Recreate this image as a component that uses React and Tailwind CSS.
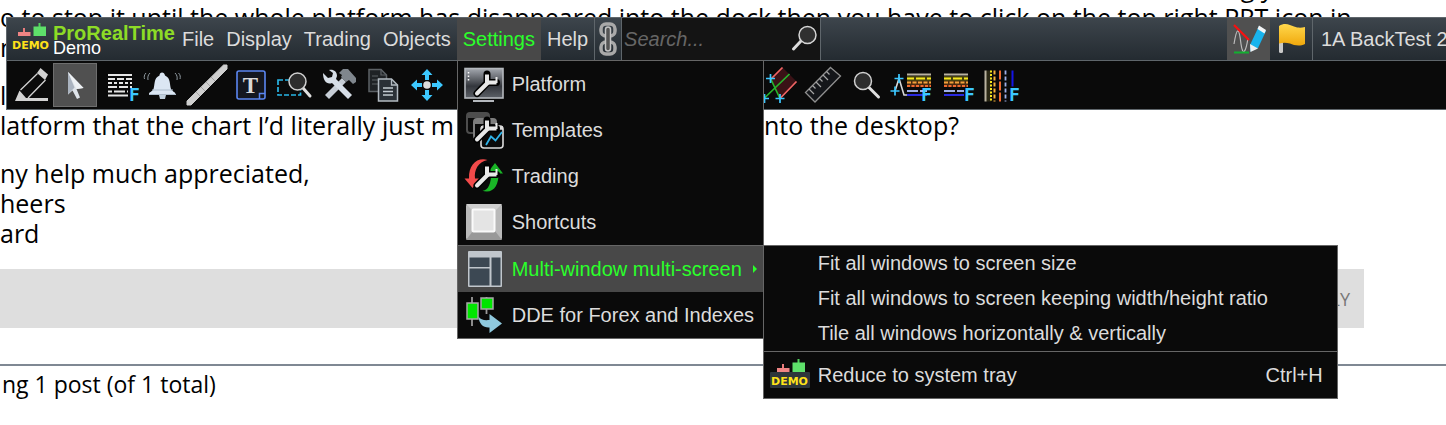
import React, { useState } from 'react';

function DemoLogo({ boxed }) {
  return (
    <svg width="40" height="32" viewBox="0 0 40 32" className="shrink-0" aria-hidden="true">
      {boxed && <rect x="0" y="13" width="40" height="16" rx="1" fill="#2d353b" />}
      <path d="M13 5v5" stroke="#e87c7c" strokeWidth="2" />
      <rect x="7" y="9" width="12.5" height="4" fill="#ee8484" />
      <path d="M28.5 0v4" stroke="#4fd35a" strokeWidth="2" />
      <rect x="22.5" y="3.5" width="12.5" height="9.5" fill="#5ee06a" />
      <text x="1" y="26" fontSize="11" fontWeight="bold" fill="#ffe21a" className="font-['DejaVu_Sans',sans-serif]">
        DEMO
      </text>
    </svg>
  );
}

function ToolSvg({ children }) {
  return (
    <svg width="44" height="44" viewBox="0 0 44 44" fill="none" className="block" aria-hidden="true">
      {children}
    </svg>
  );
}

function MenuSvg({ children }) {
  return (
    <svg width="54" height="46" viewBox="0 0 54 46" fill="none" className="block shrink-0" aria-hidden="true">
      {children}
    </svg>
  );
}

function LetterF({ x }) {
  return (
    <text x={x} y="38" fontSize="18" fontWeight="bold" fill="#3cc8ff" className="font-['DejaVu_Sans_Mono',monospace]">
      F
    </text>
  );
}

function Wrench() {
  return (
    <>
      <path d="M19 32.5L29 22M29 13v8.500h9.500" stroke="#000" strokeWidth="7" strokeLinecap="round" strokeLinejoin="round" />
      <path d="M19 32.5L30 21.500" stroke="#e8e8e8" strokeWidth="4" strokeLinecap="round" />
      <path d="M29 13.500v8h9.500" stroke="#e8e8e8" strokeWidth="4" strokeLinejoin="round" />
      <path d="M38.500 16v6" stroke="#e8e8e8" strokeWidth="2" />
    </>
  );
}

function Levels({ x }) {
  return (
    <g transform={`translate(${x} 0)`}>
      <path d="M0 14h24v10H0z" fill="#4a2a10" />
      <path d="M0 13h24v5H0z" fill="#44400f" />
      <path d="M0 11.500h24" stroke="#b9b2a0" strokeWidth="2" />
      <path d="M0 15.500h24" stroke="#f6e81c" strokeWidth="2" strokeDasharray="7 2 9 2" />
      <path d="M0 19.500h24" stroke="#f2a13a" strokeWidth="2" strokeDasharray="4 1.500" />
      <path d="M0 23h24" stroke="#f0692f" strokeWidth="2" strokeDasharray="3 1.500" />
      <path d="M0 28h20" stroke="#9fb0e8" strokeWidth="1.800" strokeDasharray="11 2" />
      <path d="M0 32h20" stroke="#2a2ae0" strokeWidth="2" />
    </g>
  );
}

const tools = [
  {
    name: 'Draw',
    icon: (
      <ToolSvg>
        <path d="M6 38l4.500-10.500 6.500 7.500H39v3z" fill="#d2d2d2" />
        <path d="M11.500 27L28.500 10.500M19 35l17.500-18" stroke="#d2d2d2" strokeWidth="1.300" />
        <path d="M31.500 5l7.500 6.500-3 5.500-8-7z" fill="#d2d2d2" />
      </ToolSvg>
    ),
  },
  {
    name: 'Pointer',
    icon: (
      <ToolSvg>
        <path d="M15 9v22.500l4.500-4L24 36l3-1.500-3.500-8.500 7-1z" fill="#dfe4ea" />
        <path d="M15 9l6.500 15.500-6.500 7z" fill="#aab3bf" />
        <path d="M15 9l15.500 16-7 1z" fill="#eef1f4" />
      </ToolSvg>
    ),
  },
  {
    name: 'Retracement levels',
    icon: (
      <ToolSvg>
        <g stroke="#e6e6e6" strokeWidth="2">
          <path d="M11 12h24" />
          <path d="M11 16h24" strokeDasharray="7 2" />
          <path d="M11 20h24" strokeDasharray="4 2 3 2" />
          <path d="M11 24h24" strokeDasharray="9 2" />
          <path d="M11 28.500h20" strokeDasharray="4 2 11 2" />
          <path d="M11 32.500h20" />
        </g>
        <LetterF x="32" />
      </ToolSvg>
    ),
  },
  {
    name: 'Alerts',
    icon: (
      <ToolSvg>
        <path d="M8 31c0-2 3-2 4.500-5 1.500-4 0-11 6-13.500 0-4 5-4 5.500 0 6 2.500 4.500 9.500 6 13.500 1.500 3 4.500 3 4.500 5z" fill="#dbe6f3" />
        <path d="M11 27h21M8 31.500h27" stroke="#aebccb" strokeWidth="1.200" />
        <path d="M18 32h7l-1 4h-5z" fill="#c1d0de" />
        <path d="M9 10c-2 2-2.500 4-2 7M5 10c-2 2-2 4-1.500 6M34 10c2 2 2.500 4 2 7M37.500 10c2 2 2 4 1.500 6" stroke="#8e989f" strokeWidth="1" />
      </ToolSvg>
    ),
  },
  {
    name: 'Line',
    icon: (
      <ToolSvg>
        <path d="M38.500 2H42v4L6 42H2v-4z" fill="#cfcfcf" stroke="#cfcfcf" />
        <path d="M11 29l4 4M16 24l4 4M21 19l4 4M26 14l4 4" stroke="#999" strokeWidth="0.800" />
      </ToolSvg>
    ),
  },
  {
    name: 'Text',
    icon: (
      <ToolSvg>
        <rect x="8" y="8" width="28" height="28" rx="2" fill="#14171f" stroke="#5b86f0" strokeWidth="1.600" />
        <path d="M30.500 36v-5.500H36" stroke="#5b86f0" strokeWidth="1.500" />
        <text x="21.5" y="29.5" textAnchor="middle" fontSize="23" fontWeight="bold" fill="#d9d9d9" className="font-['Liberation_Serif',serif]">
          T
        </text>
      </ToolSvg>
    ),
  },
  {
    name: 'Zoom area',
    icon: (
      <ToolSvg>
        <rect x="5" y="17" width="22.500" height="15" stroke="#29b6e6" strokeWidth="1.700" strokeDasharray="5 2" />
        <path d="M30 25l7 8" stroke="#e0e0e0" strokeWidth="3" strokeLinecap="round" />
        <circle cx="24.500" cy="18.500" r="8.500" fill="#2d2d2d" stroke="#d0d0d0" strokeWidth="1.500" />
      </ToolSvg>
    ),
  },
  {
    name: 'Tools',
    icon: (
      <ToolSvg>
        <path d="M8 32l17-17 4 4-17 17z" fill="#c6cdd5" />
        <path d="M22 10l4-4h5l8 9v4l-3 2-4-4-3 2-5-5 1-2z" fill="#7f868d" />
        <path d="M6 10l5 5 4-1 1-4-4-3c4-1 8 1 8 6l-1 3 16 16-4 4-16-16c-5 2-9-2-9-10z" fill="#d6dee7" />
      </ToolSvg>
    ),
  },
  {
    name: 'Copy',
    icon: (
      <ToolSvg>
        <path d="M8 6.500h12l5.500 5.500v16.500H8z" fill="#1f2225" stroke="#5c6165" strokeWidth="1.500" />
        <path d="M20 6.500V12h5.500M11 13h6M11 17h6M11 21h6" stroke="#5c6165" strokeWidth="1.200" />
        <path d="M17.500 16h13l6 6v16h-19z" fill="#2b3137" stroke="#b2bac1" strokeWidth="1.500" />
        <path d="M30.500 16v6h6" stroke="#b2bac1" strokeWidth="1.300" />
        <path d="M22 25h10M22 28.500h10M22 32h10" stroke="#c4cbd1" strokeWidth="1.500" />
      </ToolSvg>
    ),
  },
  {
    name: 'Move',
    icon: (
      <ToolSvg>
        <path
          d="M22 6l5.500 6h-3.500v5h-4v-5h-3.500zM22 38l-5.500-6h3.500v-5h4v5h3.500zM6 22l6-5.500v3.500h5v4h-5v3.500zM38 22l-6 5.500v-3.500h-5v-4h5v-3.500z"
          fill="#3cc8ff"
        />
        <circle cx="22" cy="22" r="3.800" fill="#dcdcdc" />
      </ToolSvg>
    ),
  },
];

const chartTools = [
  {
    name: 'Channel',
    icon: (
      <ToolSvg>
        <path d="M25.500 4.500L13.500 16.500 23 35.500l16.500-17z" fill="#3a1216" />
        <path d="M25.500 4.500l-12 12M39.500 18.500L23 35.500" stroke="#f06464" strokeWidth="1.700" />
        <path d="M32.500 11L7 35.500M13.500 15.500L23 35.500" stroke="#27b52c" strokeWidth="1.700" />
        <path d="M9 15.500h9M13.500 11v9M3 35.500h9M7.500 31v9M18.500 35.500h9M23 31v9" stroke="#3cc8ff" strokeWidth="1.700" />
      </ToolSvg>
    ),
  },
  {
    name: 'Ruler',
    icon: (
      <ToolSvg>
        <path d="M29.500 4.500l10 8.500L14 39l-9.500-9.500z" fill="#14161a" stroke="#8f8f8f" strokeWidth="1.300" />
        <path d="M8 26l5 5M11.500 22.500l3 3M15 19l5 5M18.500 15.500l3 3M22 12l5 5M25.500 8.500l3 3" stroke="#a5a5a5" strokeWidth="1.200" />
      </ToolSvg>
    ),
  },
  {
    name: 'Zoom',
    icon: (
      <ToolSvg>
        <path d="M24 24.500l9.500 9.500" stroke="#e0e0e0" strokeWidth="3" strokeLinecap="round" />
        <circle cx="18" cy="18" r="8.500" fill="#2d2d2d" stroke="#d0d0d0" strokeWidth="1.500" />
      </ToolSvg>
    ),
  },
  {
    name: 'Fibonacci extension',
    icon: (
      <ToolSvg>
        <path d="M6 28l4-12.500L15 32h4" stroke="#d8d8d8" strokeWidth="1.600" />
        <path d="M1.500 28h9M6 23.500v9M5.500 15.500h9M10 11v9" stroke="#3cc8ff" strokeWidth="1.700" />
        <Levels x={18} />
        <LetterF x="32" />
      </ToolSvg>
    ),
  },
  {
    name: 'Fibonacci retracement',
    icon: (
      <ToolSvg>
        <Levels x={11} />
        <LetterF x="31" />
      </ToolSvg>
    ),
  },
  {
    name: 'Fibonacci time zones',
    icon: (
      <ToolSvg>
        <path d="M9 7.500h5v31H9z" fill="#2a2714" />
        <path d="M8.500 7.500v31" stroke="#b9b2a0" strokeWidth="2" />
        <path d="M14 7.500v31" stroke="#f6e81c" strokeWidth="2" strokeDasharray="2 1.500" />
        <path d="M17.500 7.500v31" stroke="#f2b03a" strokeWidth="2" strokeDasharray="4 2" />
        <path d="M23 7.500v31" stroke="#f0692f" strokeWidth="2" strokeDasharray="9 2" />
        <path d="M28.500 7.500v31" stroke="#9fb0e8" strokeWidth="1.800" strokeDasharray="4 2" />
        <path d="M35.500 7.500v16" stroke="#1414e6" strokeWidth="2" />
        <LetterF x="32" />
      </ToolSvg>
    ),
  },
];

const settings = [
  {
    name: 'Platform',
    icon: (
      <MenuSvg>
        <defs>
          <linearGradient id="screen" x1="0" y1="0" x2="0" y2="1">
            <stop offset="0" stopColor="#a3a7ae" />
            <stop offset="0.6" stopColor="#33363c" />
            <stop offset="1" stopColor="#5d6168" />
          </linearGradient>
        </defs>
        <rect x="7" y="7.500" width="38" height="29.500" fill="url(#screen)" stroke="#b4b8bd" strokeWidth="1.600" />
        <path d="M15 40h21" stroke="#b4b8bd" strokeWidth="2" />
        <path d="M10.500 11v10" stroke="#fff" strokeWidth="1.500" strokeDasharray="1.500 2" />
        <Wrench />
      </MenuSvg>
    ),
  },
  {
    name: 'Templates',
    icon: (
      <MenuSvg>
        <rect x="9" y="6" width="22" height="20" rx="3" stroke="#4d4d4d" strokeWidth="2" />
        <path d="M9 8.500h22" stroke="#4d4d4d" strokeWidth="5" />
        <rect x="16" y="12" width="22" height="20" rx="3" fill="#0a0a0a" stroke="#7d7d7d" strokeWidth="2" />
        <path d="M16 14.500h22" stroke="#7d7d7d" strokeWidth="5" />
        <rect x="23" y="19" width="22" height="22" rx="3" fill="#0a0a0a" stroke="#dcdcdc" strokeWidth="1.600" />
        <path d="M23 21h22" stroke="#dcdcdc" strokeWidth="3.500" />
        <Wrench />
        <path d="M28 38l5-8.500 4.500 4L44 25" stroke="#2fb4ea" strokeWidth="1.800" />
      </MenuSvg>
    ),
  },
  {
    name: 'Trading',
    icon: (
      <MenuSvg>
        <path d="M29.500 7C19 4 10.500 12 11 25.500H6.500l8 9.500 6.500-9.500H17C16 17 20 9 29.500 7z" fill="#f24a4a" />
        <path d="M23.500 37.500c6 1.500 10-7 9.500-17h-4L37 10l8 10.500h-4.500C41 32 35 42 23.500 37.500z" fill="#19b526" />
        <Wrench />
      </MenuSvg>
    ),
  },
  {
    name: 'Shortcuts',
    icon: (
      <MenuSvg>
        <rect x="8" y="5" width="36" height="36" rx="2" fill="#b9b9b9" />
        <path d="M8 5h36l-7 7H15z" fill="#cfcfcf" />
        <path d="M8 41h36l-7-9H15z" fill="#999" />
        <rect x="14.500" y="10.500" width="22" height="22" rx="1" fill="#e4e4e4" stroke="#fafafa" strokeWidth="2" />
      </MenuSvg>
    ),
  },
  {
    name: 'Multi-window multi-screen',
    submenu: true,
    icon: (
      <MenuSvg>
        <rect x="10" y="5" width="34" height="36" rx="1" fill="#c0c6cc" />
        <path d="M11.500 11.500h20V21h-20zM11.500 22.500h20v17h-20zM33.500 11.500h9v28h-9z" fill="#3c4853" />
      </MenuSvg>
    ),
  },
  {
    name: 'DDE for Forex and Indexes',
    icon: (
      <MenuSvg>
        <path d="M14 5v29M28.500 5v17" stroke="#9a9a9a" strokeWidth="1.800" />
        <rect x="9" y="11" width="11" height="16" fill="#00e600" stroke="#a8a8a8" strokeWidth="1.500" />
        <rect x="23" y="6" width="12" height="11" fill="#00e600" stroke="#a8a8a8" strokeWidth="1.500" />
        <path d="M20.500 24.500c2 3.500 6 4 11 3.500V22L44 31.500 31.500 41v-5.500c-6 .5-10.500-3.500-11-11z" fill="#8fc9de" />
      </MenuSvg>
    ),
  },
];

const windowActions = [
  'Fit all windows to screen size',
  'Fit all windows to screen keeping width/height ratio',
  'Tile all windows horizontally & vertically',
];

function WindowsMenu() {
  return (
    <ul role="menu" className="absolute -top-px left-full w-[575px] border border-[#666] bg-[#0a0a0a] text-[#dcdcdc]">
      {windowActions.map(action => (
        <li key={action} role="none">
          <button role="menuitem" className="flex h-[35px] w-full items-center pb-0.5 pl-[54px] whitespace-nowrap">
            {action}
          </button>
        </li>
      ))}
      <li role="none" className="border-t border-[#666]">
        <button role="menuitem" className="flex h-[46px] w-full items-center pr-3.5 pl-1.5">
          <DemoLogo boxed />
          <span className="ml-2 flex-1 text-left">Reduce to system tray</span>
          <span>Ctrl+H</span>
        </button>
      </li>
    </ul>
  );
}

function SettingsMenu() {
  return (
    <ul role="menu" className="absolute top-full left-0 z-10 w-[307px] border border-[#666] bg-[#0a0a0a] text-[#dcdcdc]">
      {settings.map(item => (
        <li key={item.name} role="none" className={item.submenu ? 'relative border-t border-[#666] bg-[#484848] text-[#2bff2b]' : ''}>
          <button role="menuitem" className="flex h-[46px] w-full items-center whitespace-nowrap">
            {item.icon}
            <span className="flex-1 text-left">{item.name}</span>
            {item.submenu && (
              <svg width="4" height="8" viewBox="0 0 4 8" className="mr-1.5" aria-hidden="true">
                <path d="M0 0l4 4-4 4z" fill="#2bff2b" />
              </svg>
            )}
          </button>
          {item.submenu && <WindowsMenu />}
        </li>
      ))}
    </ul>
  );
}

function ToolButton({ tool, active }) {
  return (
    <button
      aria-label={tool.name}
      className={active ? 'size-11 shrink-0 bg-[#505050] outline outline-1 -outline-offset-1 outline-[#6e6e6e]' : 'size-11 shrink-0'}
    >
      {tool.icon}
    </button>
  );
}

function MenuBar() {
  const [search, setSearch] = useState('');

  return (
    <header className="flex h-[43px] items-stretch border-b border-[#5f666b] bg-linear-to-b from-[#3d454c] to-[#242b31] text-[#dcdcdc]">
      <div className="flex w-[169px] shrink-0 items-center pl-1">
        <DemoLogo />
        <div className="ml-0.5 pt-1 leading-[15px]">
          <div className="text-[20px] font-bold text-[#8ddc26]">ProRealTime</div>
          <div className="text-[18px] text-white">Demo</div>
        </div>
      </div>
      <ul role="menubar" className="flex shrink-0">
        {['File', 'Display', 'Trading', 'Objects', 'Settings', 'Help'].map(name => (
          <li key={name} role="none" className={name === 'Settings' ? 'relative bg-[#484848]' : ''}>
            <button role="menuitem" className={name === 'Settings' ? 'h-full px-1.5 text-[#2bff2b]' : 'h-full px-1.5'}>
              {name}
            </button>
            {name === 'Settings' && <SettingsMenu />}
          </li>
        ))}
      </ul>
      <button aria-label="Link windows" className="flex w-7 shrink-0 items-center justify-center border-x border-[#5f666b]">
        <svg width="18" height="34" viewBox="0 0 18 34" fill="none" aria-hidden="true">
          <rect x="2" y="2" width="14" height="12" rx="5" stroke="#a9a9a9" strokeWidth="3.500" />
          <rect x="2" y="20" width="14" height="12" rx="5" stroke="#a9a9a9" strokeWidth="3.500" />
          <rect x="6.500" y="5" width="5" height="24" rx="2.500" fill="#555" stroke="#c4c4c4" strokeWidth="1.500" />
        </svg>
      </button>
      <label className="flex w-[199px] shrink-0 items-center border-r border-[#5f666b] bg-[#141414]">
        <input
          aria-label="Search"
          className="w-0 flex-1 bg-transparent pl-0.5 italic placeholder:text-[#666]"
          placeholder="Search..."
          value={search}
          onChange={e => setSearch(e.target.value)}
        />
        <svg width="30" height="42" viewBox="0 0 30 42" fill="none" aria-hidden="true">
          <path d="M11 23l-7.500 8" stroke="#dcdcdc" strokeWidth="3" strokeLinecap="round" />
          <circle cx="17.500" cy="17" r="8.500" fill="#303030" stroke="#d6d6d6" strokeWidth="1.500" />
        </svg>
      </label>
      <div className="flex-1" />
      <button aria-label="Drawing mode" className="w-[43px] shrink-0 bg-[#505050]">
        <svg width="43" height="42" viewBox="0 0 43 42" fill="none" aria-hidden="true">
          <path d="M7 26c3-18 5-17 7 0 2 14 5 7 7-6" stroke="#bcbcbc" strokeWidth="1.200" />
          <path d="M7 7l15 15" stroke="#fa0f0f" strokeWidth="2.200" />
          <path d="M7 34.500h15" stroke="#12b030" strokeWidth="2" />
          <path d="M23 27l9-19 7 5-8 17-7.500 3.500z" fill="#18b4ee" />
          <path d="M32 7.500l7 4.500-1.500 3.500-7-4.500z" fill="#f5f5f5" />
          <path d="M23 26l8 4.500-7.500 3.500z" fill="#efefef" />
        </svg>
      </button>
      <button aria-label="Flag" className="w-[43px] shrink-0 border-r border-[#5f666b]">
        <svg width="42" height="42" viewBox="0 0 42 42" fill="none" aria-hidden="true">
          <defs>
            <linearGradient id="flag" x1="0" y1="0" x2="0" y2="1">
              <stop offset="0" stopColor="#ffd84d" />
              <stop offset="1" stopColor="#f0a80c" />
            </linearGradient>
          </defs>
          <rect x="9" y="9" width="4" height="26" rx="1.500" fill="#c9c9c9" />
          <path d="M9 8c6-4 11-1 15 .5 4 1.500 7 1.500 11 .5v17c-6 3-11 1-15-.5-4-1-7-1-11 0z" fill="url(#flag)" />
        </svg>
      </button>
      <button className="w-[133px] shrink-0 overflow-hidden pl-2 text-left whitespace-nowrap">1A BackTest 2</button>
    </header>
  );
}

function ForumPost() {
  return (
    <article className="font-['Open_Sans',sans-serif] text-[25px] leading-[30px] text-black">
      <p className="-mt-7 whitespace-nowrap">
        <span className="inline-block w-[1219px]" />
        ing y<br />
        o to stop it until the whole platform has disappeared into the dock then you have to click on the top right PRT icon in
        <br />n
      </p>
      <p className="mt-[18px] whitespace-nowrap">
        l<br />
        latform that the chart I’d literally just m
        <span className="inline-block w-[310px]" />
        nto the desktop?
      </p>
      <p className="mt-[18px]">
        ny help much appreciated,
        <br />
        heers
        <br />
        ard
      </p>
      <div className="mt-[21px] mr-[82px] flex h-[59px] items-center justify-end bg-[#dedede] pr-3.5">
        <button className="text-[18px] text-[#777]">REPLY</button>
      </div>
      <footer className="mt-9 border-t-2 border-[#7f8893] pt-[3px] pb-[26px] pl-0.5 text-[23px]">ng 1 post (of 1 total)</footer>
    </article>
  );
}

export default function App() {
  return (
    <div className="relative flow-root overflow-hidden bg-white">
      <ForumPost />
      <div className="absolute top-[17px] right-0 left-1.5 border border-r-0 border-[#5f666b] bg-[#0a0a0a] font-['Liberation_Sans',Arial,sans-serif] text-[20px] leading-6">
        <MenuBar />
        <div role="toolbar" className="flex px-0.5 py-0.5">
          {tools.map((tool, i) => (
            <ToolButton key={tool.name} tool={tool} active={i === 1} />
          ))}
          <div className="w-[308px] shrink-0" />
          {chartTools.map(tool => (
            <ToolButton key={tool.name} tool={tool} />
          ))}
        </div>
      </div>
    </div>
  );
}
